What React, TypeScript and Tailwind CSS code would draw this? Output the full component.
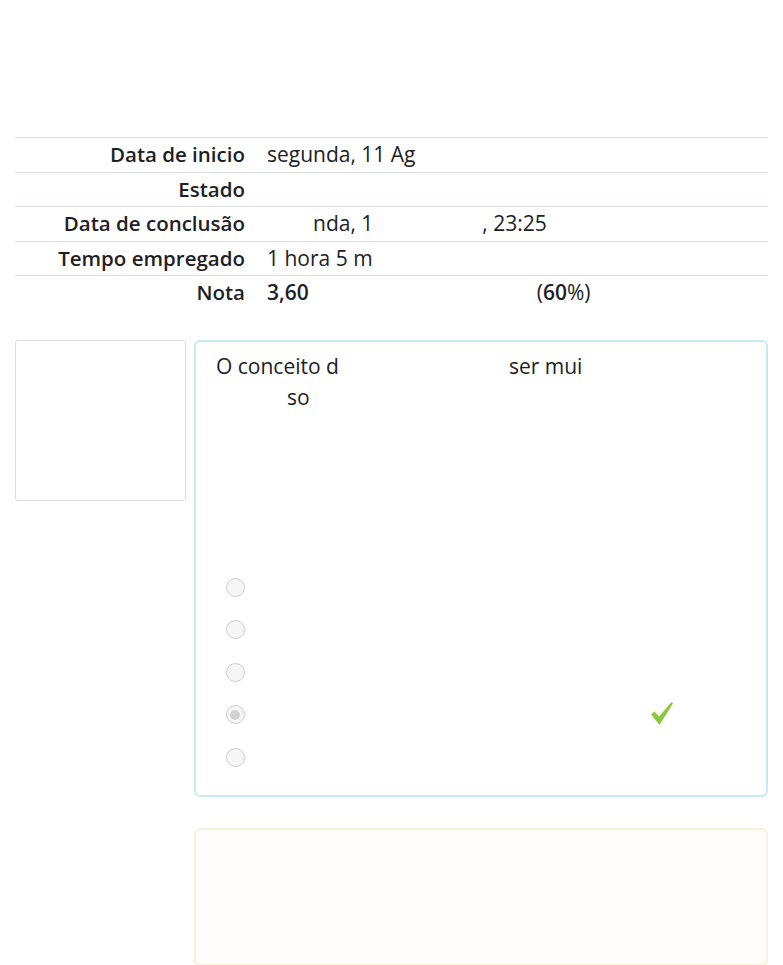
import { useState } from 'react'

const rows = [
  { label: 'Data de inicio', value: <span>segunda, 11 Ag</span> },
  { label: 'Estado', value: <span>&nbsp;</span> },
  {
    label: 'Data de conclusão',
    value: (
      <span>
        <span className="ml-[46px]">nda, 1</span>
        <span className="ml-[109px]">, 23:25</span>
      </span>
    ),
  },
  { label: 'Tempo empregado', value: <span>1 hora 5 m</span> },
  {
    label: 'Nota',
    value: (
      <span>
        <b className="font-semibold">3,60</b>
        <span className="ml-[228px]">(<b className="font-semibold">60</b>%)</span>
      </span>
    ),
  },
]

function Radio({ checked }: { checked?: boolean }) {
  return (
    <span className="w-[19px] h-[19px] rounded-full border-[1.5px] border-[#cfcfcf] bg-[#f6f6f6] flex items-center justify-center">
      {checked && <span className="w-[10px] h-[10px] rounded-full bg-[#d2d2d2]" />}
    </span>
  )
}

export default function App() {
  const [selected] = useState(3)

  return (
    <div className="min-h-screen bg-white text-[#1d2125] px-[15px] pt-[137px] text-[21px]" style={{ fontFamily: '"Open Sans", "Noto Sans", sans-serif' }}>
      {/* Summary table */}
      <div className="flex flex-col">
        {rows.map((row) => (
          <div key={row.label} className="flex items-center h-[34.5px] border-t border-[#dee2e6]">
            <div className="w-[230px] text-right text-[20.5px] font-semibold whitespace-nowrap">{row.label}</div>
            <div className="pl-[22px] whitespace-nowrap">{row.value}</div>
          </div>
        ))}
      </div>

      {/* Question */}
      <div className="flex gap-[8px] mt-[30px]">
        <div className="w-[171px] h-[161px] shrink-0 border border-[#dcdcdc] rounded-[3px]" />
        <div className="flex-1 h-[457px] border-2 border-[#c5ebf3] rounded-[6px] px-[20px] pt-[9px] leading-[31px]">
          <p>
            O conceito d<span className="ml-[170px]">ser mui</span>
          </p>
          <p className="pl-[71px]">so</p>
          <div className="mt-[165px] flex flex-col gap-[23.5px] pl-[9.5px]">
            {[0, 1, 2, 3, 4].map((n) => (
              <div key={n} className="relative flex items-center h-[19px]">
                <Radio checked={n === selected} />
                {n === selected && (
                  <svg className="absolute left-[424px] top-[-4px]" width="24" height="26" viewBox="0 0 24 26">
                    <path d="M1 13.5 L4.5 10.5 L9 15.5 L21.5 1 L23 2.5 L9.5 24 Z" fill="#8dc63f" />
                  </svg>
                )}
              </div>
            ))}
          </div>
        </div>
      </div>

      {/* Feedback */}
      <div className="ml-[179px] mt-[31px] h-[138px] border-2 border-[#fcefd9] bg-[#fffdfc] rounded-[6px]" />
    </div>
  )
}
